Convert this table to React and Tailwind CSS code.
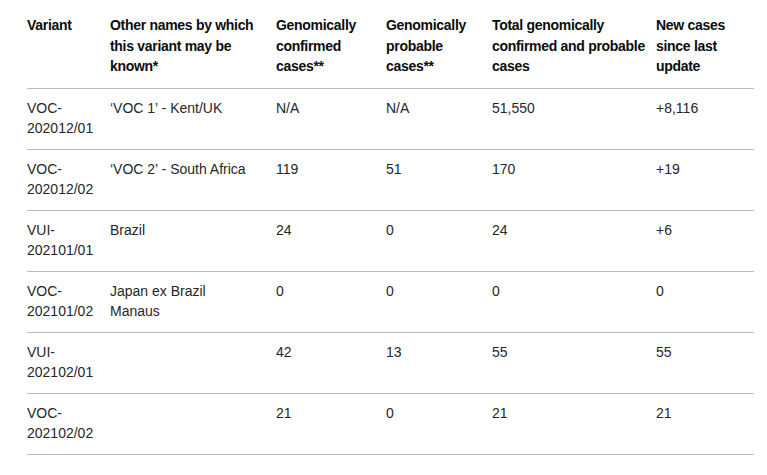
import React from 'react';

const headers = [
  ['Variant'],
  ['Other names by which', 'this variant may be', 'known*'],
  ['Genomically', 'confirmed', 'cases**'],
  ['Genomically', 'probable', 'cases**'],
  ['Total genomically', 'confirmed and probable', 'cases'],
  ['New cases', 'since last', 'update'],
];

const rows = [
  [['VOC-', '202012/01'], ['\u2018VOC 1\u2019 - Kent/UK'], ['N/A'], ['N/A'], ['51,550'], ['+8,116']],
  [['VOC-', '202012/02'], ['\u2018VOC 2\u2019 - South Africa'], ['119'], ['51'], ['170'], ['+19']],
  [['VUI-', '202101/01'], ['Brazil'], ['24'], ['0'], ['24'], ['+6']],
  [['VOC-', '202101/02'], ['Japan ex Brazil', 'Manaus'], ['0'], ['0'], ['0'], ['0']],
  [['VUI-', '202102/01'], [], ['42'], ['13'], ['55'], ['55']],
  [['VOC-', '202102/02'], [], ['21'], ['0'], ['21'], ['21']],
];

const widths = ['w-[83px]', 'w-[166px]', 'w-[110px]', 'w-[106px]', 'w-[164px]', 'w-[98px]'];

function Lines({ lines }) {
  return lines.map((l, i) => (
    <div key={i} className="whitespace-nowrap">{l}</div>
  ));
}

export default function App() {
  return (
    <div className="w-[767px] h-[475px] bg-white pl-[27px] pt-[5px] font-['Liberation_Sans',Arial,sans-serif] text-[14px] leading-[20.5px]">
      <table className="table-fixed border-collapse w-[727px]">
        <colgroup>
          {widths.map((w, i) => <col key={i} className={w} />)}
        </colgroup>
        <thead>
          <tr className="border-b border-[#b9bbbd]">
            {headers.map((h, i) => (
              <th key={i} className="text-left align-top font-bold text-[#0b0c0c] tracking-[-0.3px] pt-[10px] pb-[11px] pr-[12px]">
                <Lines lines={h} />
              </th>
            ))}
          </tr>
        </thead>
        <tbody>
          {rows.map((r, ri) => (
            <tr key={ri} className="border-b border-[#b9bbbd]">
              {r.map((c, ci) => (
                <td key={ci} className="align-top text-[#262728] pt-[9px] pb-[10px] pr-[12px] h-[61px]">
                  <Lines lines={c} />
                </td>
              ))}
            </tr>
          ))}
        </tbody>
      </table>
    </div>
  );
}
